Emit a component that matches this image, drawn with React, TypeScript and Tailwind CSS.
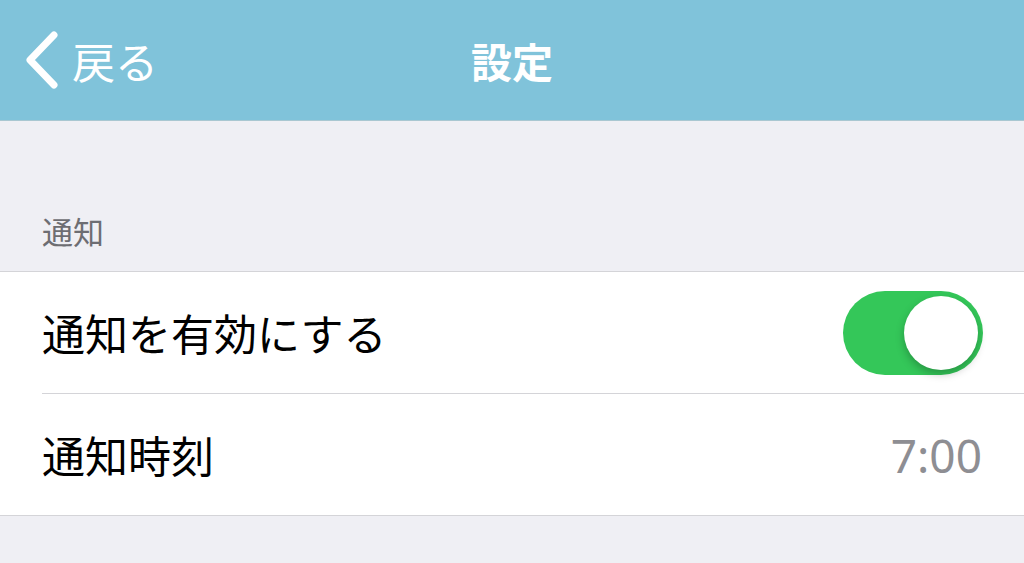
import { useState } from "react";

const font = { fontFamily: '"Noto Sans CJK JP", "Noto Sans", sans-serif' };

function Toggle({ on, onChange }: { on: boolean; onChange: () => void }) {
  return (
    <button
      type="button"
      onClick={onChange}
      className={`relative h-[84px] w-[140px] rounded-full p-[5px] ${on ? "bg-[#34c759]" : "bg-[#e5e5ea]"}`}
    >
      <span
        className={`block h-[74px] w-[74px] rounded-full bg-white shadow-[0_4px_8px_rgba(0,0,0,0.25)] ${on ? "ml-[56px]" : "ml-0"}`}
      />
    </button>
  );
}

export default function App() {
  const [enabled, setEnabled] = useState(true);

  return (
    <div className="h-[563px] w-[1024px] overflow-hidden bg-[#efeff4]" style={font}>
      <header className="relative flex h-[121px] items-center border-b border-[#a9c7d1] bg-[#80c3da]">
        <button type="button" className="flex items-center pl-[25px] text-white">
          <svg width="34" height="58" viewBox="0 0 34 58" fill="none">
            <path
              d="M29 4 L5 29 L29 54"
              stroke="white"
              strokeWidth="7"
              strokeLinecap="round"
              strokeLinejoin="round"
            />
          </svg>
          <span className="ml-[13px] text-[43px] leading-none">戻る</span>
        </button>
        <h1 className="absolute left-1/2 -translate-x-1/2 text-[41px] font-bold leading-none text-white">
          設定
        </h1>
      </header>

      <div className="px-[42px] pb-[25px] pt-[94px] text-[31px] leading-none text-[#6d6d72]">通知</div>

      <div className="border-y border-[#d4d4d8] bg-white">
        <div className="flex h-[121px] items-center justify-between pl-[42px] pr-[41px]">
          <span className="text-[43px] leading-none text-black">通知を有効にする</span>
          <Toggle on={enabled} onChange={() => setEnabled((v) => !v)} />
        </div>
        <div className="ml-[42px] border-t border-[#d4d4d8]" />
        <div className="flex h-[121px] items-center justify-between pl-[42px] pr-[42px]">
          <span className="text-[43px] leading-none text-black">通知時刻</span>
          <span className="text-[46px] leading-none text-[#8e8e93]" style={{ fontFamily: '"Noto Sans", sans-serif' }}>
            7:00
          </span>
        </div>
      </div>
    </div>
  );
}
